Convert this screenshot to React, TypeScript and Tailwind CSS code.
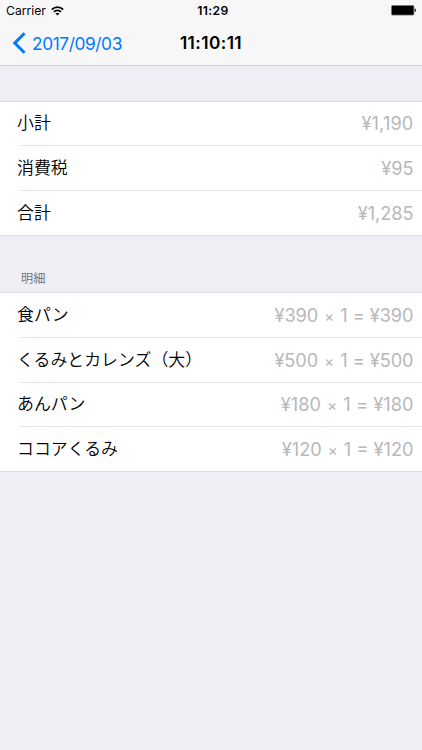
import clsx from "clsx";

type Item = {
  label: string;
  value: string;
  tracking?: string;
};

const TOTALS: Item[] = [
  { label: "小計", value: "¥1,190", tracking: "tracking-[0.15px]" },
  { label: "消費税", value: "¥95" },
  { label: "合計", value: "¥1,285" },
];

const DETAILS: Item[] = [
  { label: "食パン", value: "¥390 × 1 = ¥390" },
  { label: "くるみとカレンズ（大）", value: "¥500 × 1 = ¥500" },
  { label: "あんパン", value: "¥180 × 1 = ¥180", tracking: "tracking-[0.05px]" },
  { label: "ココアくるみ", value: "¥120 × 1 = ¥120", tracking: "tracking-[0px]" },
];

function StatusBar() {
  return (
    <div className="grid h-5 grid-cols-3 items-center pt-[2px] pr-1.5 pl-1.5 text-[12.2px] leading-[18px] text-black">
      <div className="flex items-center gap-[5px]">
        <span>Carrier</span>
        <svg className="mb-px" width="13" height="10" viewBox="0 0 13 10" fill="none" stroke="currentColor" strokeWidth="1.7" aria-hidden>
          <path d="M0.8 3.6C4 0.4 9 0.4 12.2 3.6" />
          <path d="M2.9 5.8C4.9 3.8 8.1 3.8 10.1 5.8" />
          <path d="M6.5 9.6L4.5 7.5C5.6 6.5 7.4 6.5 8.5 7.5Z" fill="currentColor" stroke="none" />
        </svg>
      </div>
      <span className="pl-1 text-center font-semibold tracking-[0.35px]">11:29</span>
      <svg className="mb-px justify-self-end" width="25" height="11" viewBox="0 0 25 11" aria-hidden>
        <rect x="0.5" y="0.5" width="22.4" height="9.6" rx="1.2" fill="#000" stroke="#777" strokeWidth="0.8" />
        <path d="M23.6 3.6C24.8 3.8 25 4.4 25 5.3S24.8 6.8 23.6 7Z" fill="#222" />
      </svg>
    </div>
  );
}

function NavBar() {
  return (
    <div className="grid h-[45px] grid-cols-[1fr_auto_1fr] items-center text-[17.3px]">
      <button className="flex items-center gap-[6px] pt-px pl-3 text-[#007aff]">
        <svg width="14" height="22" viewBox="0 0 14 22" fill="none" stroke="currentColor" strokeWidth="3" aria-hidden>
          <path d="M12.5 1.2L2.8 11L12.5 20.8" />
        </svg>
        <span className="pt-px tracking-[-0.4px]">2017/09/03</span>
      </button>
      <h1 className="pt-px font-semibold tracking-[0.4px] text-black">11:10:11</h1>
    </div>
  );
}

function Group({ items }: { items: Item[] }) {
  return (
    <ul className="relative bg-white">
      {items.map((item, i) => (
        <li key={item.label} className="relative flex h-[44.7px] items-center justify-between pt-[2.2px] pr-[8.5px] pl-[17px]">
          <div className={clsx("absolute top-0 right-0 h-px", i === 0 ? "left-0 bg-[#dcdce1]" : "left-5 bg-[#e6e6e8]")} />
          <span className="text-[16.9px] font-[350] text-black">{item.label}</span>
          <span className={clsx("text-[18.2px] text-[#b8b8bb]", item.tracking ?? "tracking-[-0.05px]")}>
            {item.value.split("×").map((part, n) => (
              <span key={n}>
                {n > 0 && <span className="mx-px text-[15px]">×</span>}
                {part}
              </span>
            ))}
          </span>
        </li>
      ))}
      <div className="absolute inset-x-0 top-full h-px bg-[#dcdce1]" />
    </ul>
  );
}

export default function App() {
  return (
    <div className="h-[750px] w-[422px] overflow-hidden bg-[#efeef4] font-['Inter','Noto_Sans_CJK_JP',sans-serif]">
      <header className="mb-[34.7px] h-[66px] border-b border-[#cfced4] bg-[#f7f7f8]">
        <StatusBar />
        <NavBar />
      </header>
      <Group items={TOTALS} />
      <h2 className="mt-[34.2px] h-[23.4px] pl-[21px] text-[12.2px] leading-[20px] font-[350] text-[#6d6d72]">明細</h2>
      <Group items={DETAILS} />
    </div>
  );
}
